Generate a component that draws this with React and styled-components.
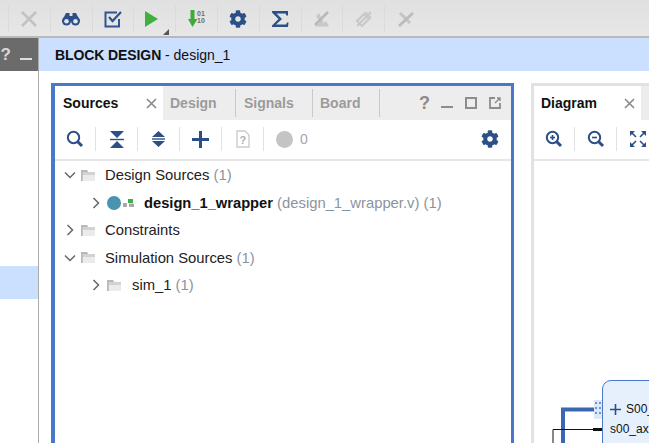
import React from "react";
import styled, { createGlobalStyle } from "styled-components";
import { FaCog } from "react-icons/fa";

const GlobalStyle = createGlobalStyle`
  html, body {
    margin: 0;
    padding: 0;
    width: 649px;
    height: 443px;
    overflow: hidden;
    background: #ffffff;
    font-family: "Liberation Sans", Arial, sans-serif;
  }
  * {
    box-sizing: border-box;
  }
`;

const Page = styled.div`
  width: 649px;
  height: 443px;
  display: flex;
  flex-direction: column;
  overflow: hidden;
`;

const MainToolbar = styled.div`
  height: 38px;
  flex-shrink: 0;
  display: flex;
  padding-left: 8px;
  padding-top: 5px;
  background: linear-gradient(#e0e0e0, #e7e7e7);
  border-bottom: 2px solid #b9b9b9;
`;

const MainTool = styled.div`
  width: 41.8px;
  height: 27px;
  display: flex;
  align-items: center;
  justify-content: center;
  position: relative;
  padding-right: ${props => props.nudge || 0}px;
  border-left: 1px solid #dbdbdb;
  color: #2b4f86;
`;

const CornerArrow = styled.span`
  position: absolute;
  right: 6px;
  bottom: -3px;
  width: 0;
  height: 0;
  border-left: 6px solid transparent;
  border-bottom: 6px solid #555555;
`;

const Main = styled.div`
  flex: 1;
  display: flex;
  min-height: 0;
`;

const LeftDock = styled.div`
  width: 39px;
  flex-shrink: 0;
  border-right: 1px solid #ababab;
`;

const LeftHeader = styled.div`
  height: 33px;
  background: #6b6b6b;
  color: #d8d8d8;
  display: flex;
  align-items: center;
  justify-content: flex-end;
  gap: 9px;
  padding-right: 6px;
  font-weight: bold;
  font-size: 17px;
`;

const Dash = styled.span`
  width: 12px;
  height: 2px;
  margin-top: 8px;
  background: ${props => props.color || "#dddddd"};
`;

const SelectedRow = styled.div`
  height: 33px;
  margin-top: 195px;
  background: #cbdfff;
`;

const Workspace = styled.div`
  flex: 1;
  min-width: 0;
  display: flex;
  flex-direction: column;
`;

const DesignHeader = styled.div`
  height: 33px;
  flex-shrink: 0;
  display: flex;
  align-items: center;
  padding-left: 16px;
  background: #cbdfff;
  color: #111111;
  font-size: 14px;
  b {
    letter-spacing: -0.1px;
  }
`;

const Panels = styled.div`
  flex: 1;
  min-height: 0;
  display: flex;
  gap: 17px;
  padding: 12px 0 0 12px;
  overflow: hidden;
`;

const Panel = styled.div`
  width: ${props => props.width}px;
  flex-shrink: 0;
  display: flex;
  flex-direction: column;
  background: #ffffff;
  border: 3px solid ${props => props.borderColor};
  border-left-width: ${props => props.leftWidth}px;
  border-bottom: none;
`;

const TabBar = styled.div`
  height: 34px;
  flex-shrink: 0;
  display: flex;
  background: #ededed;
`;

const ActiveTab = styled.div`
  width: ${props => props.width}px;
  flex-shrink: 0;
  display: flex;
  align-items: center;
  justify-content: space-between;
  padding: 0 6px 0 ${props => props.inset}px;
  background: #ffffff;
  color: #111111;
  font-size: 14px;
  font-weight: bold;
`;

const Tab = styled.div`
  width: ${props => props.width}px;
  height: 28px;
  margin-top: 3px;
  flex-shrink: 0;
  display: flex;
  align-items: center;
  padding-left: ${props => props.inset}px;
  border-right: 1px solid #c9c9c9;
  color: #9b9b9b;
  font-size: 14px;
  font-weight: bold;
`;

const WindowButtons = styled.div`
  margin-left: auto;
  display: flex;
  align-items: center;
  gap: 12px;
  padding-right: 10px;
  color: #8c8c8c;
`;

const HelpMark = styled.span`
  width: 10px;
  font-size: 18px;
  font-weight: bold;
  color: #8c8c8c;
`;

const PanelToolbar = styled.div`
  height: 41px;
  flex-shrink: 0;
  display: flex;
  align-items: flex-start;
  padding-top: 7px;
  border-bottom: 2px solid #e6e6e6;
`;

const Tool = styled.div`
  width: 42px;
  height: 24px;
  flex-shrink: 0;
  display: flex;
  align-items: center;
  justify-content: center;
  gap: 7px;
  border-right: ${props => (props.last ? "none" : "1px solid #e2e2e2")};
  color: #2b4f86;
`;

const FirstTool = styled(Tool)`
  width: 41px;
`;

const CountTool = styled(Tool)`
  width: 56px;
  justify-content: flex-start;
  padding-left: 12px;
  border-right: none;
  color: #a0a8b2;
  font-size: 14px;
`;

const ToolEnd = styled.div`
  margin-left: auto;
  padding-right: 12px;
  height: 24px;
  display: flex;
  align-items: center;
  color: #2b4f86;
`;

const Tree = styled.div`
  display: flex;
  flex-direction: column;
  padding-top: 0.5px;
`;

const Row = styled.div`
  height: 27.5px;
  display: flex;
  align-items: center;
  padding-left: ${props => 9 + props.depth * 26}px;
  color: #222222;
  font-size: 14.8px;
`;

const Chevron = styled.span`
  width: 12px;
  height: 12px;
  flex-shrink: 0;
  display: flex;
  align-items: center;
  justify-content: center;
  margin-right: 5px;
`;

const Label = styled.span`
  margin-left: ${props => props.offset}px;
  white-space: pre;
  font-weight: ${props => (props.strong ? "bold" : "normal")};
  font-size: ${props => (props.strong ? "14.7px" : "inherit")};
  color: ${props => (props.strong ? "#111111" : "#222222")};
`;

const Muted = styled.span`
  color: #8c93a0;
  white-space: pre;
`;

const Canvas = styled.div`
  flex: 1;
  position: relative;
  min-height: 0;
`;

const Wires = styled.svg`
  position: absolute;
  left: 0;
  top: 0;
`;

const Block = styled.div`
  position: absolute;
  left: 68px;
  top: 219px;
  width: 120px;
  height: 80px;
  border: 1px solid #4a78c8;
  border-radius: 9px;
  background: #e6f0fd;
  color: #111111;
  font-size: 12px;
  padding: 18px 0 0 7px;
`;

const BlockRow = styled.div`
  height: 20px;
  display: flex;
  align-items: center;
  gap: 5px;
  white-space: pre;
`;

const Dot = styled.span`
  width: 17px;
  height: 17px;
  border-radius: 50%;
  background: #c4c4c4;
  flex-shrink: 0;
`;

const CloseX = ({ color = "#8c8c8c" }) => (
  <svg width="11" height="11" viewBox="0 0 11 11">
    <path d="M1 1L10 10M10 1L1 10" stroke={color} strokeWidth="1.7" fill="none" />
  </svg>
);

const ChevronRight = () => (
  <svg width="8" height="12" viewBox="0 0 8 12">
    <path d="M1.5 1L6.5 6L1.5 11" stroke="#666666" strokeWidth="1.5" fill="none" />
  </svg>
);

const ChevronDown = () => (
  <svg width="12" height="8" viewBox="0 0 12 8">
    <path d="M1 1.5L6 6.5L11 1.5" stroke="#666666" strokeWidth="1.5" fill="none" />
  </svg>
);

const Folder = () => (
  <svg width="14" height="13" viewBox="0 0 14 13">
    <path d="M0 1H6L7 3H14V12H0Z" fill="#d2d2d2" />
    <path d="M2 6H14V12H2Z" fill="#ebebeb" />
    <path d="M0 1H6L7 3H1.5V12H0Z" fill="#b8b8b8" />
  </svg>
);

const WrapperIcon = () => (
  <svg width="29" height="16" viewBox="0 0 29 16" style={{ flexShrink: 0 }}>
    <circle cx="7" cy="8" r="7" fill="#4a93b0" />
    <rect x="16" y="8" width="4" height="4" fill="#a8a8a8" />
    <rect x="21" y="4" width="5" height="4" fill="#3fae4f" />
    <rect x="22" y="8.5" width="5" height="3.5" fill="#a8a8a8" />
  </svg>
);

const CloseXLarge = () => (
  <svg width="18" height="18" viewBox="0 0 18 18">
    <path d="M2 2L16 16M16 2L2 16" stroke="#c2c2c2" strokeWidth="2.6" fill="none" />
  </svg>
);

const BinocularsIcon = () => (
  <svg width="18" height="14" viewBox="0 0 18 14">
    <path d="M4 1H7.5V4H10.5V1H14L18 9H0Z" fill="#2b4f86" />
    <circle cx="4.5" cy="9" r="4.5" fill="#2b4f86" />
    <circle cx="13.5" cy="9" r="4.5" fill="#2b4f86" />
    <circle cx="4.5" cy="9.3" r="2.3" fill="#dfe4ee" />
    <circle cx="13.5" cy="9.3" r="2.3" fill="#dfe4ee" />
  </svg>
);

const CheckBoxIcon = () => (
  <svg width="18" height="18" viewBox="0 0 18 18">
    <path d="M15 9V16.5H1.5V2.5H13" stroke="#2f5590" strokeWidth="2" fill="none" />
    <path d="M5 7L8.5 11L17 2" stroke="#2f5590" strokeWidth="2.2" fill="none" />
  </svg>
);

const PlayIcon = () => (
  <svg width="15" height="18" viewBox="0 0 15 18">
    <path d="M1 1L14 9L1 17Z" fill="#3eb23c" />
  </svg>
);

const BitstreamIcon = () => (
  <svg width="18" height="19" viewBox="0 0 18 19">
    <path d="M2.5 1H6.5V10H9.5L4.5 18L0 10H2.5Z" fill="#3eaa3e" />
    <text x="9" y="6.5" fontSize="7" fontWeight="bold" fontFamily="Liberation Sans" fill="#6f6f6f">01</text>
    <text x="9" y="13.5" fontSize="7" fontWeight="bold" fontFamily="Liberation Sans" fill="#6f6f6f">10</text>
  </svg>
);

const SigmaIcon = () => (
  <svg width="18" height="18" viewBox="0 0 18 18">
    <path d="M1 1H17V5.5H15.5L14.5 3.4H5.5L11 9L5 14.6H15L16 12.5H17.5L17 17H1V15.5L7.5 9L1 2.5Z" fill="#2b4f86" />
  </svg>
);

const DisabledPin = () => (
  <svg width="18" height="18" viewBox="0 0 18 18">
    <path d="M2 16.5H16L13 11L11 13L6 3L3 6L7 12Z" fill="#c8c8c8" />
    <path d="M2 15L15 2" stroke="#b8b8b8" strokeWidth="2.5" />
  </svg>
);

const DisabledTag = () => (
  <svg width="18" height="18" viewBox="0 0 18 18">
    <path d="M2 11L9 4L14 9L7 16Z" fill="none" stroke="#c8c8c8" strokeWidth="2" />
    <path d="M2 16L16 2" stroke="#c8c8c8" strokeWidth="2" />
    <path d="M10 2L16 8" stroke="#c8c8c8" strokeWidth="2" />
  </svg>
);

const DisabledCross = () => (
  <svg width="18" height="18" viewBox="0 0 18 18">
    <path d="M3 3L13 13" stroke="#c4c4c4" strokeWidth="3" />
    <path d="M2 16L16 3" stroke="#bcbcbc" strokeWidth="3" />
  </svg>
);

const SearchIcon = ({ sign }) => (
  <svg width="18" height="18" viewBox="0 0 18 18">
    <circle cx="7.5" cy="7.5" r="5.7" fill="none" stroke="#2b4f86" strokeWidth="2" />
    <path d="M11.5 11.5L16 16" stroke="#2b4f86" strokeWidth="3" />
    {sign && <path d="M5 7.5H10" stroke="#2b4f86" strokeWidth="1.6" />}
    {sign === "plus" && <path d="M7.5 5V10" stroke="#2b4f86" strokeWidth="1.6" />}
  </svg>
);

const CollapseIcon = () => (
  <svg width="14" height="17" viewBox="0 0 14 17">
    <path d="M0 0H14L7 7Z M0 17H14L7 10Z" fill="#2b4f86" />
    <path d="M0 8.5H14" stroke="#2b4f86" strokeWidth="1.4" />
  </svg>
);

const ExpandIcon = () => (
  <svg width="15" height="16" viewBox="0 0 15 16">
    <path d="M7.5 0L14 6H1Z M7.5 16L14 10H1Z" fill="#2b4f86" />
    <path d="M1 8H14" stroke="#2b4f86" strokeWidth="1.4" />
  </svg>
);

const PlusIcon = () => (
  <svg width="17" height="17" viewBox="0 0 17 17">
    <path d="M8.5 0V17M0 8.5H17" stroke="#2b4f86" strokeWidth="3" />
  </svg>
);

const DocIcon = () => (
  <svg width="14" height="18" viewBox="0 0 14 18">
    <path d="M1 1H9L13 5V17H1Z" fill="none" stroke="#cccccc" strokeWidth="1.4" />
    <text x="3.6" y="14" fontSize="11" fontWeight="bold" fontFamily="Liberation Sans" fill="#b0b0b0">?</text>
  </svg>
);

const MaximizeIcon = () => (
  <svg width="12" height="12" viewBox="0 0 12 12">
    <rect x="1" y="1" width="10" height="10" fill="none" stroke="#8c8c8c" strokeWidth="2" />
  </svg>
);

const FloatIcon = () => (
  <svg width="12" height="12" viewBox="0 0 12 12">
    <path d="M6 1H1V11H11V6" fill="none" stroke="#8c8c8c" strokeWidth="1.8" />
    <path d="M6 6L11 1M8 1H11V4" fill="none" stroke="#8c8c8c" strokeWidth="1.4" />
  </svg>
);

const FitIcon = () => (
  <svg width="18" height="18" viewBox="0 0 18 18">
    <path d="M1 1H6L1 6Z M17 1H12L17 6Z M1 17H6L1 12Z M17 17H12L17 12Z" fill="#2b4f86" />
    <path d="M2 2L7 7M16 2L11 7M2 16L7 11M16 16L11 11" stroke="#2b4f86" strokeWidth="1.6" />
  </svg>
);

const mainTools = [
  { key: "close", icon: <CloseXLarge /> },
  { key: "find", icon: <BinocularsIcon /> },
  { key: "check", icon: <CheckBoxIcon /> },
  { key: "run", icon: <PlayIcon />, arrow: true, nudge: 7 },
  { key: "bits", icon: <BitstreamIcon /> },
  { key: "settings", icon: <FaCog size={18} /> },
  { key: "sigma", icon: <SigmaIcon /> },
  { key: "pin", icon: <DisabledPin /> },
  { key: "tag", icon: <DisabledTag /> },
  { key: "cross", icon: <DisabledCross /> },
];

const App = () => {
  return (
    <Page>
      <GlobalStyle />
      <MainToolbar>
        {mainTools.map(tool => (
          <MainTool key={tool.key} nudge={tool.nudge}>
            {tool.icon}
            {tool.arrow && <CornerArrow />}
          </MainTool>
        ))}
      </MainToolbar>
      <Main>
        <LeftDock>
          <LeftHeader>
            <span>?</span>
            <Dash />
          </LeftHeader>
          <SelectedRow />
        </LeftDock>
        <Workspace>
          <DesignHeader>
            <b>BLOCK DESIGN</b>
            <span>&nbsp;- design_1</span>
          </DesignHeader>
          <Panels>
            <Panel width={463} borderColor="#4a78c8" leftWidth={4}>
              <TabBar>
                <ActiveTab width={108} inset={8}>
                  Sources
                  <CloseX />
                </ActiveTab>
                <Tab width={73} inset={7}>Design</Tab>
                <Tab width={77} inset={8}>Signals</Tab>
                <Tab width={67} inset={7}>Board</Tab>
                <WindowButtons>
                  <HelpMark>?</HelpMark>
                  <Dash color="#8c8c8c" />
                  <MaximizeIcon />
                  <FloatIcon />
                </WindowButtons>
              </TabBar>
              <PanelToolbar>
                <FirstTool><SearchIcon /></FirstTool>
                <Tool><CollapseIcon /></Tool>
                <Tool><ExpandIcon /></Tool>
                <Tool><PlusIcon /></Tool>
                <Tool><DocIcon /></Tool>
                <CountTool>
                  <Dot />
                  0
                </CountTool>
                <ToolEnd><FaCog size={18} /></ToolEnd>
              </PanelToolbar>
              <Tree>
                <Row depth={0}>
                  <Chevron><ChevronDown /></Chevron>
                  <Folder />
                  <Label offset={10}>Design Sources <Muted>(1)</Muted></Label>
                </Row>
                <Row depth={1}>
                  <Chevron><ChevronRight /></Chevron>
                  <WrapperIcon />
                  <Label offset={8} strong>design_1_wrapper</Label>
                  <Muted> (design_1_wrapper.v) (1)</Muted>
                </Row>
                <Row depth={0}>
                  <Chevron><ChevronRight /></Chevron>
                  <Folder />
                  <Label offset={10}>Constraints</Label>
                </Row>
                <Row depth={0}>
                  <Chevron><ChevronDown /></Chevron>
                  <Folder />
                  <Label offset={10}>Simulation Sources <Muted>(1)</Muted></Label>
                </Row>
                <Row depth={1}>
                  <Chevron><ChevronRight /></Chevron>
                  <Folder />
                  <Label offset={11}>sim_1 <Muted>(1)</Muted></Label>
                </Row>
              </Tree>
            </Panel>
            <Panel width={300} borderColor="#e2e2e2" leftWidth={3}>
              <TabBar>
                <ActiveTab width={107} inset={7}>
                  Diagram
                  <CloseX />
                </ActiveTab>
              </TabBar>
              <PanelToolbar>
                <FirstTool><SearchIcon sign="plus" /></FirstTool>
                <Tool><SearchIcon sign="minus" /></Tool>
                <Tool last><FitIcon /></Tool>
              </PanelToolbar>
              <Canvas>
                <Wires width="120" height="285" viewBox="0 0 120 285">
                  <path d="M29 285V248.5H60" stroke="#3a66b4" strokeWidth="4" fill="none" />
                  <path d="M19 285V268.5H68" stroke="#111111" strokeWidth="1" fill="none" />
                  <path d="M59 268.5H68" stroke="#111111" strokeWidth="3" fill="none" />
                  <rect x="60" y="239" width="8" height="19" fill="#dce8f8" />
                  <path d="M62 241V256M66 241V256" stroke="#4a78c8" strokeWidth="1.5" strokeDasharray="2 3" />
                </Wires>
                <Block>
                  <BlockRow>
                    <svg width="11" height="11" viewBox="0 0 11 11">
                      <path d="M5.5 0V11M0 5.5H11" stroke="#2b4f86" strokeWidth="1.6" />
                    </svg>
                    S00_
                  </BlockRow>
                  <BlockRow>s00_ax</BlockRow>
                </Block>
              </Canvas>
            </Panel>
          </Panels>
        </Workspace>
      </Main>
    </Page>
  );
};

export default App;
